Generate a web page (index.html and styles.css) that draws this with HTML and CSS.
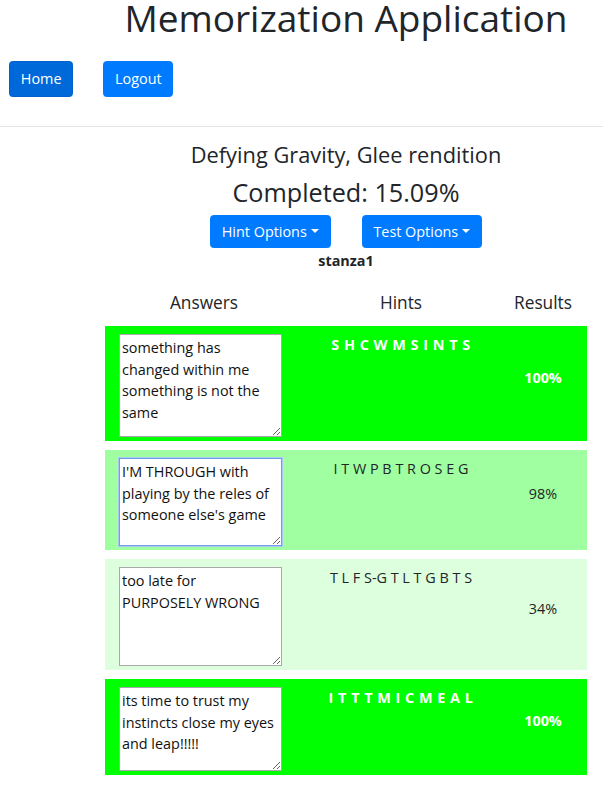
FILE: index.html
```html
<!DOCTYPE html>
<html lang="en">
<head>
<meta charset="utf-8">
<title>Memorization Application</title>
<link rel="stylesheet" href="styles.css">
</head>
<body>
<header class="top">
  <h1 class="app-title">Memorization Application</h1>
  <nav class="nav">
    <button class="btn btn-active" type="button">Home</button>
    <button class="btn" type="button">Logout</button>
  </nav>
</header>
<hr class="rule">
<main class="main">
  <h4 class="song-title">Defying Gravity, Glee rendition</h4>
  <h3 class="completed">Completed: 15.09%</h3>
  <div class="options">
    <button class="btn btn-dropdown" type="button">Hint Options<span class="caret"></span></button>
    <button class="btn btn-dropdown" type="button">Test Options<span class="caret"></span></button>
  </div>
  <div class="stanza">stanza1</div>
  <div class="grid">
    <div class="head">Answers</div>
    <div class="head">Hints</div>
    <div class="head">Results</div>

    <div class="row row-full">
      <div class="cell-answer"><textarea class="answer ta-1">something has changed within me something is not the same</textarea></div>
      <div class="cell-hint hint-strong">S H C W M S I N T S</div>
      <div class="cell-result result-strong">100%</div>
    </div>

    <div class="row row-good">
      <div class="cell-answer"><textarea class="answer ta-2 focused">I'M THROUGH with playing by the reles of someone else's game</textarea></div>
      <div class="cell-hint">I T W P B T R O S E G</div>
      <div class="cell-result">98%</div>
    </div>

    <div class="row row-weak">
      <div class="cell-answer"><textarea class="answer ta-3">too late for PURPOSELY WRONG</textarea></div>
      <div class="cell-hint">T L F S-G T L T G B T S</div>
      <div class="cell-result">34%</div>
    </div>

    <div class="row row-full">
      <div class="cell-answer"><textarea class="answer ta-4">its time to trust my instincts close my eyes and leap!!!!!</textarea></div>
      <div class="cell-hint hint-strong">I T T T M I C M E A L</div>
      <div class="cell-result result-strong">100%</div>
    </div>
  </div>
</main>
</body>
</html>
```

FILE: styles.css
```css
* { box-sizing: border-box; }

body {
  margin: 0;
  font-family: "Open Sans", "Noto Sans", sans-serif;
  font-size: 14.4px;
  line-height: 1.5;
  color: #212529;
  background: #fff;
  overflow: hidden;
}

.top {
  padding: 0 0 0 9px;
}

.app-title {
  margin: 0;
  padding-left: 80px;
  text-align: center;
  font-size: 37px;
  font-weight: 500;
  line-height: 35px;
  color: #212529;
}

.nav {
  display: flex;
  gap: 30px;
  margin-top: 26px;
}

.btn {
  font-family: inherit;
  font-size: 14.4px;
  line-height: 21.6px;
  padding: 6px 10.8px;
  color: #fff;
  background: #007bff;
  border: 1px solid #007bff;
  border-radius: 3.6px;
  cursor: pointer;
}

.btn-active {
  background: #0069d9;
  border-color: #0062cc;
}

.rule {
  margin: 29px 0 0;
  border: 0;
  border-top: 1px solid rgba(0, 0, 0, 0.1);
}

.main {
  padding-left: 89px;
  display: flex;
  flex-direction: column;
  align-items: center;
}

.song-title {
  margin: 15px 0 0;
  font-size: 21.8px;
  font-weight: 500;
  line-height: 26px;
}

.completed {
  margin: 9px 0 0;
  font-size: 25.2px;
  font-weight: 500;
  line-height: 30px;
}

.options {
  display: flex;
  gap: 31px;
  margin-top: 8px;
}

.btn-dropdown {
  padding: 5px 10.8px;
}

.caret {
  display: inline-block;
  margin-left: 4px;
  vertical-align: 3.5px;
  border-top: 4.3px solid #fff;
  border-left: 4.3px solid transparent;
  border-right: 4.3px solid transparent;
}

.stanza {
  font-weight: 700;
  font-size: 14.4px;
  line-height: 20px;
  margin-top: 3px;
}

.grid {
  margin-top: 19px;
  width: 482px;
  display: grid;
  grid-template-columns: 198px 196px 88px;
  row-gap: 9px;
}

.head {
  text-align: center;
  font-size: 17.3px;
  font-weight: 500;
  line-height: 26px;
  padding-bottom: 1px;
}

.row {
  display: contents;
}

.row > div { background: #00ff00; }
.row-good > div { background: #a0ffa0; }
.row-weak > div { background: #ddffdd; }

.cell-answer {
  padding: 8px 0 4px 14px;
}

.answer {
  display: block;
  width: 163px;
  margin: 0;
  padding: 2px;
  font-family: inherit;
  font-size: 14.4px;
  line-height: 21.6px;
  color: #111;
  background: #fff;
  border: 1px solid #a9a9a9;
  border-radius: 0;
  resize: both;
}

.ta-1 { height: 103px; }
.ta-2 { height: 88px; }
.ta-3 { height: 99px; }
.ta-4 { height: 84px; }

.focused {
  border-color: #6f9fe6;
  box-shadow: 0 0 0 1px #a9c8f3;
  outline: none;
}

.cell-hint {
  text-align: center;
  padding-top: 8px;
  font-size: 14.4px;
  line-height: 21.6px;
  color: #212529;
}

.hint-strong {
  color: #fff;
  font-weight: 700;
  letter-spacing: 0.5px;
}

.cell-result {
  display: flex;
  align-items: center;
  justify-content: center;
  padding-bottom: 12px;
}

.result-strong {
  color: #fff;
  font-weight: 700;
}
```
